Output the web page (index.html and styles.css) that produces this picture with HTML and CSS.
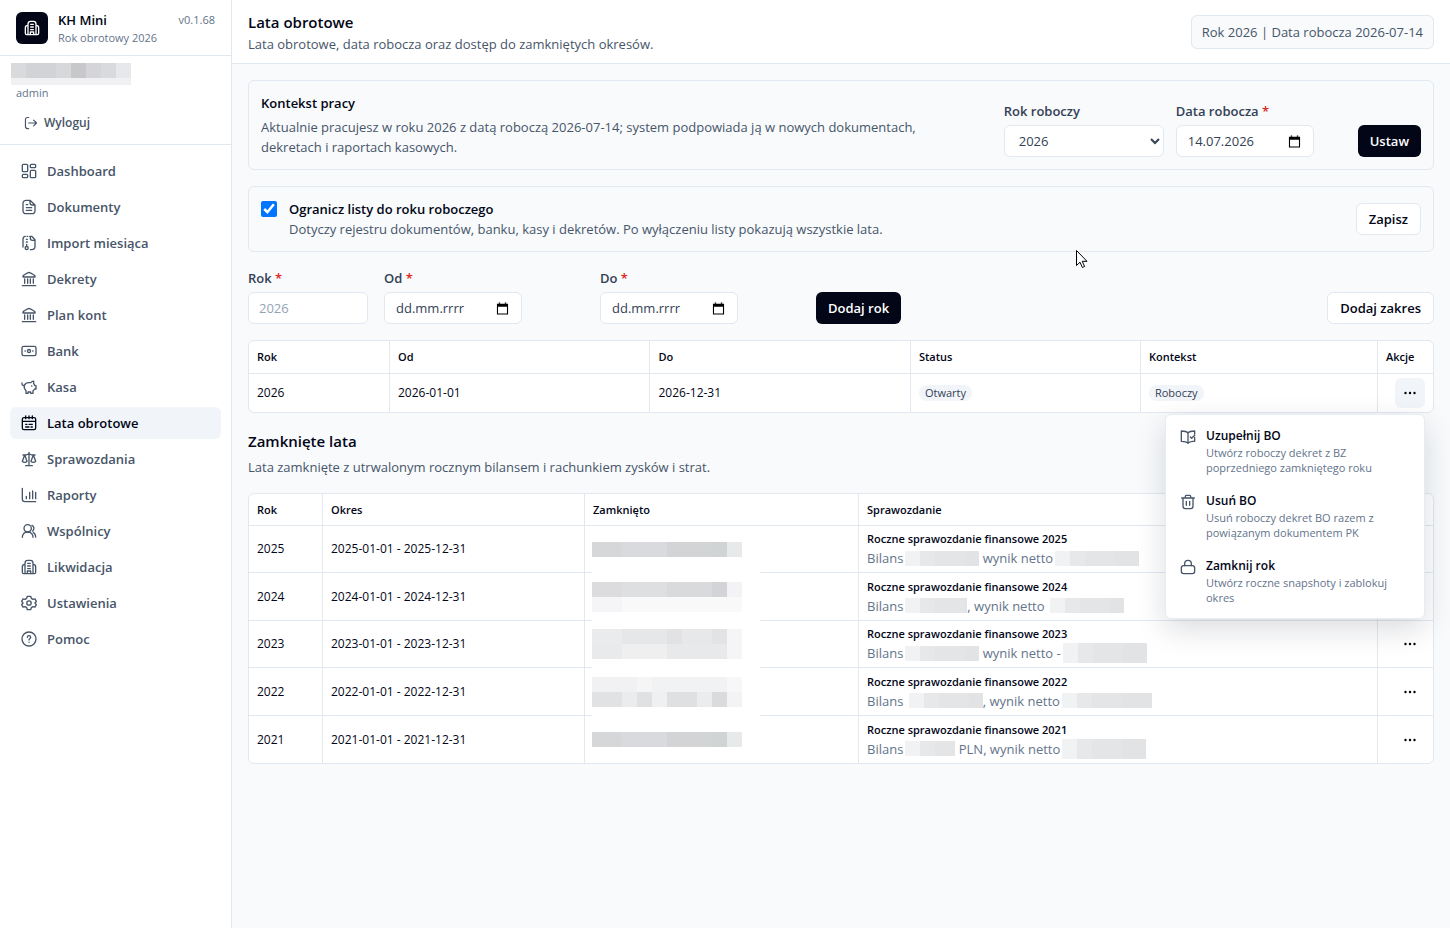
FILE: index.html
```html
<!DOCTYPE html>
<html lang="pl">
<head>
  <meta charset="UTF-8">
  <title>KH Mini - Lata obrotowe</title>
  <meta name="viewport" content="width=device-width, initial-scale=1.0">
  <link rel="stylesheet" href="styles.css">
</head>
<body>
  <svg class="sprite" aria-hidden="true">
    <symbol id="i-building" viewBox="0 0 24 24"><path d="M6 22V6c0-2.500 1-4 4-4h4c3 0 4 1.500 4 4v16M6 8c-3 0-4 1.500-4 3.500V20c0 1.500.5 2 2 2h16c1.500 0 2-.5 2-2v-8.500c0-2-1-3.500-4-3.500M10 6.500h4M10 10.500h4M10 14.500h4M9.500 22v-4h5v4"/></symbol>
    <symbol id="i-logout" viewBox="0 0 24 24"><path d="M8 2.500H6C3.500 2.500 2.500 3.500 2.500 6v12c0 2.500 1 3.500 3.500 3.500h2M8 12h13.500M16.500 7l5 5-5 5"/></symbol>
    <symbol id="i-dashboard" viewBox="0 0 24 24"><rect x="2" y="2" width="8" height="11" rx="1.500"/><rect x="14" y="2" width="8" height="5" rx="1.500"/><rect x="2" y="17" width="8" height="5" rx="1.500"/><rect x="14" y="11" width="8" height="11" rx="1.500"/></symbol>
    <symbol id="i-file" viewBox="0 0 24 24"><path d="M13.500 2H8C4.700 2 3 3.200 3 6.500v11C3 20.800 4.700 22 8 22h8c3.300 0 5-1.200 5-4.500V9zM13.500 2v3.500C13.500 8 14.500 9 17 9h4M8 8.500h2M8 13h8M8 17h8"/></symbol>
    <symbol id="i-zip" viewBox="0 0 24 24"><path d="M13 2h3l5 5V17c0 3.500-1.500 5-5 5h-2M14 2v3c0 2 1 3 3 3h4M3 18V6.500C3 3.500 4 2 6.500 2M8 6.500h1.500M8 10.500h1.500M9 2h1M8.500 14v2.500"/><circle cx="8.500" cy="19.500" r="2.300"/></symbol>
    <symbol id="i-bank" viewBox="0 0 24 24"><path d="M2 22h20M3 9h18c.700-2-1-3-2.500-3.700L14 2.800c-1.500-.900-2.500-.900-4 0L5.500 5.300C4 6 2.300 7 3 9zM5.500 12v6.500M10 12v6.500M14 12v6.500M18.500 12v6.500"/></symbol>
    <symbol id="i-money" viewBox="0 0 24 24"><rect x="1.500" y="5" width="21" height="14" rx="2.500"/><circle cx="12" cy="12" r="2.300"/><path d="M6 12h.5M17.500 12h.5"/></symbol>
    <symbol id="i-pig" viewBox="0 0 24 24"><path d="M5 9.500C6.500 6.700 9 5.500 11.500 5.500h3.200C16 4 17.300 3 19 3.300V7c1 .8 1.500 1.700 1.800 3H22.500v5H20.500c-.7 1.300-1.500 2-2.500 2.600V21.500h-3.500v-2H10.500v2H7.500v-4C5.500 15.500 4 12.500 5 9.500zM5 9.500C2.500 10 1 8.500 1.500 6M16 10.500h.3"/></symbol>
    <symbol id="i-calendar" viewBox="0 0 24 24"><path d="M7 1.500v4M12 1.500v4M17 1.500v4M2.500 9.500h19M7 14h2M12 14h5M7 18h5M15 18h2"/><rect x="2" y="4" width="20" height="18" rx="2.500"/></symbol>
    <symbol id="i-scale" viewBox="0 0 24 24"><path d="M12 2v20M7 22h10M3 6h4c2 0 3-1.500 5-1.500S15 6 17 6h4M5.500 6L2 15.500c1.500 2 5.500 2 7 0zM18.500 6L15 15.500c1.500 2 5.500 2 7 0z"/></symbol>
    <symbol id="i-chart" viewBox="0 0 24 24"><path d="M2 2v16c0 3 1 4 4 4h16M8 17.500V14M13 17.500V8M17.500 17.500V6M22 17.500V8"/></symbol>
    <symbol id="i-users" viewBox="0 0 24 24"><circle cx="10" cy="8" r="5.500"/><path d="M2 21.500c0-4.500 3-8 8-8s8 3.500 8 8M16.500 3.500c3.500 1.500 3.700 6 1 8.500M18.500 14c2.300 1.500 3.500 4 3.500 7"/></symbol>
    <symbol id="i-settings" viewBox="0 0 24 24"><circle cx="12" cy="12" r="3.300"/><path d="M9.500 2h5l1 3 2.500 1.500 3-.7 2 3.700-2 2.500 2 2.500-2 3.700-3-.7-2.500 1.500-1 3h-5l-1-3L6 17.500l-3 .7-2-3.700L3 12 1 9.500l2-3.700 3 .7L8.500 5z"/></symbol>
    <symbol id="i-help" viewBox="0 0 24 24"><circle cx="12" cy="12" r="10.500"/><path d="M9.500 9.500C9.500 8 10.700 7 12 7s2.500 1 2.500 2.500c0 1.800-2.500 2-2.500 4M12 16.700v.3"/></symbol>
    <symbol id="i-book" viewBox="0 0 24 24"><path d="M12 6v15.500M12 6C10 3.500 6 3 2 3v15.500c4.500 0 8 .5 10 3 1.500-2 4-2.800 7-3M12 6c2-2.500 6-3 10-3v5M22 12.500v6h-3M15.500 12l2 2L22 9.500"/></symbol>
    <symbol id="i-trash" viewBox="0 0 24 24"><path d="M2.500 6h19M4.500 6v12.500c0 2.500 1 3.500 3.500 3.500h8c2.500 0 3.500-1 3.500-3.500V6M8 6V3.500C8 2.500 8.500 2 9.500 2h5c1 0 1.500.5 1.500 1.500V6M9.500 11v6M14.500 11v6"/></symbol>
    <symbol id="i-lock" viewBox="0 0 24 24"><rect x="2" y="10" width="20" height="12" rx="3.500"/><path d="M7 10V7c0-3 2-5 5-5s5 2 5 5v3"/></symbol>
    <symbol id="i-date" viewBox="0 0 14 14"><path d="M1 2h12v11.500H1zM2.200 5v7.300h9.600V5z" fill="#000" fill-rule="evenodd"/><path d="M3 .5h1.500V2H3zM9.500.5H11V2H9.500z" fill="#000"/></symbol>
    <symbol id="i-dots" viewBox="0 0 14 4"><circle cx="2.500" cy="2" r="1.200"/><circle cx="7" cy="2" r="1.200"/><circle cx="11.500" cy="2" r="1.200"/></symbol>
  </svg>

  <div class="app">
    <aside class="sidebar">
      <div class="brand">
        <span class="logo"><svg class="icon"><use href="#i-building"/></svg></span>
        <div class="brand-text">
          <strong>KH Mini</strong>
          <span>Rok obrotowy 2026</span>
        </div>
        <span class="version">v0.1.68</span>
      </div>
      <div class="user">
        <span class="redacted user-name"></span>
        <span class="role">admin</span>
        <button class="logout" type="button"><svg class="icon"><use href="#i-logout"/></svg>Wyloguj</button>
      </div>
      <nav class="nav">
        <a href="#"><svg class="icon"><use href="#i-dashboard"/></svg>Dashboard</a>
        <a href="#"><svg class="icon"><use href="#i-file"/></svg>Dokumenty</a>
        <a href="#"><svg class="icon"><use href="#i-zip"/></svg>Import miesiąca</a>
        <a href="#"><svg class="icon"><use href="#i-bank"/></svg>Dekrety</a>
        <a href="#"><svg class="icon"><use href="#i-bank"/></svg>Plan kont</a>
        <a href="#"><svg class="icon"><use href="#i-money"/></svg>Bank</a>
        <a href="#"><svg class="icon"><use href="#i-pig"/></svg>Kasa</a>
        <a href="#" class="active"><svg class="icon"><use href="#i-calendar"/></svg>Lata obrotowe</a>
        <a href="#"><svg class="icon"><use href="#i-scale"/></svg>Sprawozdania</a>
        <a href="#"><svg class="icon"><use href="#i-chart"/></svg>Raporty</a>
        <a href="#"><svg class="icon"><use href="#i-users"/></svg>Wspólnicy</a>
        <a href="#"><svg class="icon"><use href="#i-building"/></svg>Likwidacja</a>
        <a href="#"><svg class="icon"><use href="#i-settings"/></svg>Ustawienia</a>
        <a href="#"><svg class="icon"><use href="#i-help"/></svg>Pomoc</a>
      </nav>
    </aside>

    <div class="main">
      <header class="topbar">
        <div>
          <h1>Lata obrotowe</h1>
          <p>Lata obrotowe, data robocza oraz dostęp do zamkniętych okresów.</p>
        </div>
        <div class="context-pill">Rok 2026 | Data robocza 2026-07-14</div>
      </header>

      <main class="content">
        <section class="card">
          <div class="card-text">
            <h2>Kontekst pracy</h2>
            <p>Aktualnie pracujesz w roku 2026 z datą roboczą 2026-07-14; system podpowiada ją w nowych dokumentach, dekretach i raportach kasowych.</p>
          </div>
          <form class="context-form">
            <div class="field field-select">
              <label for="work-year">Rok roboczy</label>
              <select id="work-year"><option>2026</option></select>
            </div>
            <div class="field field-work-date">
              <label for="work-date">Data robocza <span class="req">*</span></label>
              <div class="date"><input id="work-date" type="text" value="14.07.2026"><button type="button" aria-label="Wybierz datę"><svg><use href="#i-date"/></svg></button></div>
            </div>
            <button class="btn btn-dark" type="button">Ustaw</button>
          </form>
        </section>

        <section class="card card-limit">
          <input id="limit" type="checkbox" checked>
          <label class="limit-text" for="limit">
            <strong>Ogranicz listy do roku roboczego</strong>
            <span>Dotyczy rejestru dokumentów, banku, kasy i dekretów. Po wyłączeniu listy pokazują wszystkie lata.</span>
          </label>
          <button class="btn" type="button">Zapisz</button>
        </section>

        <form class="year-form">
          <div class="field field-year">
            <label for="year">Rok <span class="req">*</span></label>
            <input id="year" type="text" placeholder="2026">
          </div>
          <div class="field field-date">
            <label for="from">Od <span class="req">*</span></label>
            <div class="date"><input id="from" type="text" placeholder="dd.mm.rrrr"><button type="button" aria-label="Wybierz datę"><svg><use href="#i-date"/></svg></button></div>
          </div>
          <div class="field field-date">
            <label for="to">Do <span class="req">*</span></label>
            <div class="date"><input id="to" type="text" placeholder="dd.mm.rrrr"><button type="button" aria-label="Wybierz datę"><svg><use href="#i-date"/></svg></button></div>
          </div>
          <button class="btn btn-dark" type="button">Dodaj rok</button>
          <button class="btn btn-range" type="button">Dodaj zakres</button>
        </form>

        <div class="table-box">
          <table class="years">
            <thead>
              <tr><th class="w-year">Rok</th><th class="w-from">Od</th><th class="w-to">Do</th><th class="w-status">Status</th><th>Kontekst</th><th class="w-actions">Akcje</th></tr>
            </thead>
            <tbody>
              <tr>
                <td>2026</td>
                <td>2026-01-01</td>
                <td>2026-12-31</td>
                <td><span class="badge">Otwarty</span></td>
                <td><span class="badge">Roboczy</span></td>
                <td class="actions">
                  <div class="menu-wrap">
                    <button class="dots open" type="button" aria-label="Akcje"><svg><use href="#i-dots"/></svg></button>
                    <div class="menu">
                      <button type="button"><svg class="icon"><use href="#i-book"/></svg><span><strong>Uzupełnij BO</strong><small>Utwórz roboczy dekret z BZ poprzedniego zamkniętego roku</small></span></button>
                      <button type="button"><svg class="icon"><use href="#i-trash"/></svg><span><strong>Usuń BO</strong><small>Usuń roboczy dekret BO razem z powiązanym dokumentem PK</small></span></button>
                      <button type="button"><svg class="icon"><use href="#i-lock"/></svg><span><strong>Zamknij rok</strong><small>Utwórz roczne snapshoty i zablokuj okres</small></span></button>
                    </div>
                  </div>
                </td>
              </tr>
            </tbody>
          </table>
        </div>

        <div class="section-head">
          <h2>Zamknięte lata</h2>
          <p>Lata zamknięte z utrwalonym rocznym bilansem i rachunkiem zysków i strat.</p>
        </div>

        <div class="table-box">
          <table class="closed">
            <thead>
              <tr><th class="w-closed-year">Rok</th><th class="w-period">Okres</th><th class="w-closed-at">Zamknięto</th><th>Sprawozdanie</th><th class="w-actions"></th></tr>
            </thead>
            <tbody>
              <tr>
                <td>2025</td><td>2025-01-01 - 2025-12-31</td><td class="closed-at"><span class="redacted stamp"></span></td>
                <td><strong>Roczne sprawozdanie finansowe 2025</strong><div class="report">Bilans<span class="redacted amount w74"></span>&nbsp;wynik netto<span class="redacted amount w84"></span></div></td>
                <td class="actions"><button class="dots" type="button" aria-label="Akcje"><svg><use href="#i-dots"/></svg></button></td>
              </tr>
              <tr>
                <td>2024</td><td>2024-01-01 - 2024-12-31</td><td class="closed-at"><span class="redacted stamp stamp-fade"></span></td>
                <td><strong>Roczne sprawozdanie finansowe 2024</strong><div class="report">Bilans<span class="redacted amount w62"></span>, wynik netto&nbsp;<span class="redacted amount w74"></span></div></td>
                <td class="actions"><button class="dots" type="button" aria-label="Akcje"><svg><use href="#i-dots"/></svg></button></td>
              </tr>
              <tr>
                <td>2023</td><td>2023-01-01 - 2023-12-31</td><td class="closed-at"><span class="redacted stamp stamp-soft"></span></td>
                <td><strong>Roczne sprawozdanie finansowe 2023</strong><div class="report">Bilans<span class="redacted amount w74"></span>&nbsp;wynik netto -<span class="redacted amount amount-tall w84"></span></div></td>
                <td class="actions"><button class="dots" type="button" aria-label="Akcje"><svg><use href="#i-dots"/></svg></button></td>
              </tr>
              <tr>
                <td>2022</td><td>2022-01-01 - 2022-12-31</td><td class="closed-at"><span class="redacted stamp stamp-rise"></span></td>
                <td><strong>Roczne sprawozdanie finansowe 2022</strong><div class="report">Bilans&nbsp;<span class="redacted amount w74"></span>, wynik netto<span class="redacted amount w90"></span></div></td>
                <td class="actions"><button class="dots" type="button" aria-label="Akcje"><svg><use href="#i-dots"/></svg></button></td>
              </tr>
              <tr>
                <td>2021</td><td>2021-01-01 - 2021-12-31</td><td class="closed-at"><span class="redacted stamp"></span></td>
                <td><strong>Roczne sprawozdanie finansowe 2021</strong><div class="report">Bilans<span class="redacted amount w50"></span>&nbsp;PLN, wynik netto<span class="redacted amount amount-tall w84"></span></div></td>
                <td class="actions"><button class="dots" type="button" aria-label="Akcje"><svg><use href="#i-dots"/></svg></button></td>
              </tr>
            </tbody>
          </table>
        </div>
      </main>
    </div>
  </div>

  <svg class="pointer" viewBox="0 0 13 20" aria-hidden="true"><path d="M1.500 1.500v15l3.500-3.300 2.400 5.300 2.200-1-2.400-5.200h4.800z"/></svg>
</body>
</html>
```
FILE: styles.css
```css
* {
  box-sizing: border-box;
}
body {
  margin: 0;
  font-family: "Open Sans", "Noto Sans", sans-serif;
  font-size: 13px;
  line-height: 20px;
  color: #020617;
  background: #f8fafc;
}
h1, h2, p {
  margin: 0;
}
h1, h2, strong {
  font-weight: 600;
}
button, input, select {
  font: inherit;
  color: inherit;
}
button {
  cursor: pointer;
}
.sprite {
  display: none;
}
.icon {
  width: 16px;
  height: 16px;
  flex: none;
  fill: none;
  stroke: currentColor;
  stroke-width: 2;
  stroke-linecap: round;
  stroke-linejoin: round;
}
.app {
  display: flex;
  min-height: 100vh;
}

/* sidebar */
.sidebar {
  width: 232px;
  flex: none;
  background: #fff;
  border-right: 1px solid #e2e8f0;
}
.brand {
  display: flex;
  align-items: center;
  gap: 10px;
  height: 56px;
  padding: 0 16px;
  border-bottom: 1px solid #e2e8f0;
}
.logo {
  display: flex;
  align-items: center;
  justify-content: center;
  width: 32px;
  height: 32px;
  border-radius: 6px;
  background: #020617;
  color: #fff;
}
.brand-text {
  flex: 1;
  white-space: nowrap;
}
.brand-text strong, .brand-text span {
  display: block;
}
.brand-text span {
  font-size: 11px;
  line-height: 16px;
  color: #64748b;
}
.version {
  align-self: flex-start;
  padding-top: 10px;
  font-size: 11px;
  color: #64748b;
}
.user {
  display: flex;
  flex-direction: column;
  align-items: flex-start;
  height: 89px;
  padding: 7px 16px;
  border-bottom: 1px solid #e2e8f0;
}
.role {
  font-size: 11px;
  line-height: 16px;
  color: #64748b;
}
.logout {
  display: flex;
  align-items: center;
  gap: 6px;
  height: 28px;
  margin-top: 8px;
  padding: 0 8px;
  border: 0;
  background: none;
  font-size: 12px;
  font-weight: 600;
  color: #475569;
}
.logout .icon {
  width: 14px;
  height: 14px;
}
.nav {
  display: flex;
  flex-direction: column;
  gap: 4px;
  padding: 10px;
}
.nav a {
  display: flex;
  align-items: center;
  gap: 10px;
  height: 32px;
  padding: 0 11px;
  border-radius: 6px;
  font-weight: 600;
  color: #475569;
  text-decoration: none;
}
.nav a.active {
  background: #f1f5f9;
  color: #020617;
}

/* top bar */
.main {
  flex: 1;
  min-width: 0;
}
.topbar {
  display: flex;
  align-items: center;
  justify-content: space-between;
  height: 64px;
  padding: 0 16px;
  background: #fff;
  border-bottom: 1px solid #e2e8f0;
}
.topbar h1, .section-head h2 {
  font-size: 15px;
  line-height: 24px;
}
.section-head h2 {
  margin-bottom: 4px;
}
.topbar p, .card p, .section-head p {
  color: #475569;
}
.context-pill {
  padding: 6px 10px;
  border: 1px solid #e2e8f0;
  border-radius: 6px;
  background: #f8fafc;
  color: #475569;
}
.content {
  display: flex;
  flex-direction: column;
  gap: 16px;
  padding: 16px;
}

/* cards and forms */
.card {
  display: flex;
  justify-content: space-between;
  gap: 48px;
  padding: 12px;
  border: 1px solid #e2e8f0;
  border-radius: 6px;
}
.card h2 {
  margin-bottom: 4px;
  font-size: 13px;
  line-height: 20px;
}
.context-form, .year-form {
  display: flex;
  align-items: flex-end;
}
.context-form {
  flex: none;
  gap: 12px;
}
.year-form {
  gap: 16px;
}
.field label {
  display: block;
  margin-bottom: 4px;
  font-weight: 600;
  color: #334155;
}
.req {
  color: #dc2626;
}
.field-select {
  width: 160px;
}
.field-work-date {
  width: 170px;
}
.field-year {
  width: 120px;
}
.field-date {
  width: 200px;
}
.field select, .field-year input, .date {
  height: 32px;
  border: 1px solid #e2e8f0;
  border-radius: 6px;
  background: #fff;
  color: #334155;
}
.field select {
  display: block;
  width: 100%;
  padding: 0 0 0 10px;
}
.field-year input {
  display: block;
  width: 100%;
  padding: 0 10px;
}
.field-year input::placeholder {
  color: #94a3b8;
}
.date {
  display: flex;
  align-items: center;
  width: 138px;
  padding: 0 12px 0 11px;
}
.date input {
  flex: 1;
  min-width: 0;
  padding: 0;
  border: 0;
  background: none;
}
.date input::placeholder {
  color: #334155;
}
.date button {
  display: flex;
  padding: 0;
  border: 0;
  background: none;
}
.date svg {
  width: 13px;
  height: 13px;
}
.btn {
  height: 32px;
  padding: 0 12px;
  border: 1px solid #e2e8f0;
  border-radius: 6px;
  background: #fff;
  font-weight: 600;
  white-space: nowrap;
}
.btn-dark {
  border: 0;
  background: #020617;
  color: #fff;
}
.btn-range {
  margin-left: auto;
}
.card-limit {
  align-items: center;
  gap: 12px;
}
.card-limit input {
  align-self: flex-start;
  width: 16px;
  height: 16px;
  margin: 2px 0;
  accent-color: #0075ff;
}
.limit-text {
  flex: 1;
}
.limit-text strong, .limit-text span {
  display: block;
}
.limit-text span {
  color: #475569;
}

/* tables */
.table-box {
  border: 1px solid #e2e8f0;
  border-radius: 6px;
  background: #fff;
}
table {
  width: 100%;
  table-layout: fixed;
  border-collapse: separate;
  border-spacing: 0;
  font-size: 12px;
}
th, td {
  padding: 0 8px;
  text-align: left;
  border-right: 1px solid #e2e8f0;
  border-bottom: 1px solid #e2e8f0;
}
th {
  height: 33px;
  font-size: 11px;
  font-weight: 600;
}
th:last-child, td:last-child {
  border-right: 0;
}
tbody tr:last-child td {
  border-bottom: 0;
}
.years td {
  height: 38px;
}
.w-year {
  width: 141px;
}
.w-from, .w-to {
  width: 22%;
}
.w-status {
  width: 230px;
}
.w-actions {
  width: 55px;
}
.badge {
  display: inline-block;
  padding: 0 6px;
  border-radius: 8px;
  background: #f1f5f9;
  font-size: 11px;
  line-height: 16px;
  color: #334155;
}
.actions {
  text-align: right;
}
.menu-wrap {
  position: relative;
}
.dots {
  display: flex;
  align-items: center;
  justify-content: center;
  width: 30px;
  height: 30px;
  margin-left: auto;
  padding: 0;
  border: 0;
  border-radius: 6px;
  background: none;
}
.dots.open {
  background: #f1f5f9;
}
.dots svg {
  width: 14px;
  height: 4px;
}

/* row menu */
.menu {
  position: absolute;
  top: 36px;
  right: 0;
  z-index: 2;
  width: 260px;
  padding: 4px;
  border: 1px solid #e8ecf1;
  border-radius: 6px;
  background: #fff;
  box-shadow: 0 10px 30px rgba(15, 23, 42, 0.15);
}
.menu button {
  display: flex;
  gap: 10px;
  width: 100%;
  padding: 8px 10px;
  border: 0;
  background: none;
  text-align: left;
}
.menu .icon {
  margin-top: 2px;
  color: #475569;
}
.menu strong, .menu small {
  display: block;
}
.menu strong {
  font-size: 12px;
  line-height: 18px;
}
.menu small {
  margin-bottom: 1px;
  font-size: 11px;
  line-height: 15px;
  color: #64748b;
}

.closed th {
  height: 32px;
}
.closed td {
  height: 47px;
}
.closed tr:nth-child(even) td {
  height: 48px;
}
.closed strong {
  display: block;
  font-size: 11px;
  line-height: 18px;
}
.w-closed-year {
  width: 74px;
}
.w-period {
  width: 262px;
}
.w-closed-at {
  width: 274px;
}
.report {
  display: flex;
  align-items: center;
  font-size: 13px;
  color: #64748b;
}

/* hidden values */
.redacted {
  display: block;
  background: #e4e6e9;
}
.user-name {
  width: 120px;
  height: 22px;
  margin-left: -5px;
  background:
    linear-gradient(#f1f1f3, #f1f1f3) 0 15px / 120px 7px no-repeat,
    linear-gradient(90deg, #d9dadc 0 15px, #d2d3d6 15px 45px, #d6d8da 45px 60px, #c7c8ca 60px 75px, #d5d5d9 75px 90px, #d9dadd 90px 105px, #e7e8eb 105px) 0 0 / 120px 15px no-repeat;
}
.closed-at {
  position: relative;
}
.closed tr:not(:last-child) .closed-at::after {
  content: "";
  position: absolute;
  left: 7px;
  bottom: -1px;
  width: 168px;
  height: 2px;
  background: #fefefe;
}
.closed thead .closed-at::after {
  display: none;
}
.stamp {
  width: 150px;
  height: 15px;
  margin-left: -1px;
  background: linear-gradient(90deg, #d6d7d9 0 30px, #d9dadd 30px 75px, #d3d4d6 75px 120px, #d0d4d5 120px 135px, #e8e9eb 135px);
}
.stamp-fade {
  height: 30px;
  background:
    linear-gradient(90deg, #dcdcde 0 30px, #dedfe1 30px 75px, #d9dadc 75px 120px, #d3d4d7 120px 135px, #f3f3f5 135px) 0 0 / 150px 15px no-repeat,
    linear-gradient(90deg, #f5f5f8 0 30px, #f9f9fa 30px);
}
.stamp-soft {
  height: 30px;
  background:
    linear-gradient(90deg, #e9ebec 0 30px, #e6e7e8 30px 75px, #e2e2e4 75px 90px, #e7e8e9 90px 120px, #e1e3e4 120px 135px, #f5f5f6 135px) 0 0 / 150px 15px no-repeat,
    linear-gradient(90deg, #e8eaec 0 30px, #efefef 30px 75px, #e8e9ea 75px 135px, #f5f5f6 135px);
}
.stamp-rise {
  height: 30px;
  background:
    linear-gradient(90deg, #f1f1f3 0 45px, #f5f5f6 45px 60px, #f1f2f3 60px 135px, #f7f7f8 135px) 0 0 / 150px 15px no-repeat,
    linear-gradient(90deg, #e1e2e4 0 30px, #ebecee 30px 45px, #e0e1e3 45px 60px, #eff0f2 60px 75px, #dfe0e2 75px 105px, #ebecee 105px 120px, #dadbdd 120px 135px, #f3f3f5 135px);
}
.amount {
  height: 15px;
  margin-left: 2px;
  background: linear-gradient(90deg, #f1f2f3 0 15px, #e7e8ea 15px 30px, #e3e5e7 30px 60px, #e1e3e5 60px);
}
.amount-tall {
  height: 20px;
}
.w50 {
  width: 50px;
}
.w62 {
  width: 62px;
}
.w74 {
  width: 74px;
}
.w84 {
  width: 84px;
}
.w90 {
  width: 90px;
}

/* mouse pointer lies over the page */
.pointer {
  position: absolute;
  left: 1075px;
  top: 249px;
  width: 13px;
  height: 20px;
  fill: #fff;
  stroke: #000;
}
```
